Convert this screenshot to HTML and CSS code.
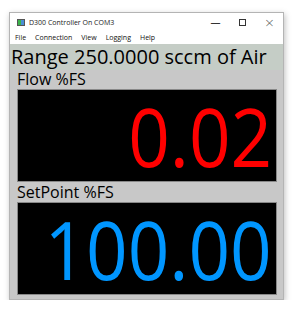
FILE: index.html
```html
<!DOCTYPE html>
<html lang="en">
<head>
    <meta charset="UTF-8">
    <title>D300 Controller On COM3</title>
    <link rel="stylesheet" href="styles.css">
</head>
<body>

    <div class="window">
        <div class="title-bar">
            <div class="app-icon"><span class="icon-green"></span><span class="icon-blue"></span></div>
            <span class="title">D300 Controller On COM3</span>
            <div class="controls">
                <span class="ctl">&#8212;</span>
                <span class="ctl"><span class="max-box"></span></span>
                <span class="ctl close">&#215;</span>
            </div>
        </div>
        <div class="menu-bar">
            <span>File</span>
            <span>Connection</span>
            <span>View</span>
            <span>Logging</span>
            <span>Help</span>
        </div>
        <div class="range">Range 250.0000 sccm of Air</div>
        <div class="content">
            <div class="label">Flow %FS</div>
            <div class="readout flow"><span class="value">0.02</span></div>
            <div class="label">SetPoint %FS</div>
            <div class="readout setpoint"><span class="value">100.00</span></div>
        </div>
    </div>

</body>
</html>
```

FILE: styles.css
```css
body {
    margin: 0;
    background-color: white;
    font-family: "Open Sans", Arial, sans-serif;
    overflow: hidden;
}
.window {
    margin: 12px 0 0 9px;
    width: 273px;
    height: 286px;
    border: 1px solid #b4b4b4;
    box-shadow: 1px 2px 6px rgba(0, 0, 0, 0.25);
    display: flex;
    flex-direction: column;
    background-color: #c8c8c8;
}
.title-bar {
    height: 18px;
    background-color: white;
    display: flex;
    align-items: center;
    font-size: 7px;
    color: #222;
}
.app-icon {
    width: 8px;
    height: 7px;
    margin: 0 4px 0 7px;
    display: flex;
    background-color: #555;
    padding: 1px;
    box-sizing: border-box;
}
.icon-green {
    width: 3px;
    background-color: #3cb44b;
}
.icon-blue {
    width: 3px;
    background-color: #4a8fd6;
}
.controls {
    margin-left: auto;
    display: flex;
}
.ctl {
    width: 27px;
    text-align: center;
    font-size: 10px;
    color: #333;
}
.max-box {
    display: inline-block;
    width: 7px;
    height: 7px;
    border: 1px solid #333;
    box-sizing: border-box;
}
.close {
    font-size: 13px;
    font-family: "DejaVu Sans", sans-serif;
    font-weight: 200;
    color: #555;
}
.menu-bar {
    height: 13px;
    background-color: white;
    display: flex;
    gap: 9px;
    padding-left: 5px;
    font-size: 7px;
    line-height: 13px;
    color: #111;
}
.range {
    height: 26px;
    background-color: #c5cdc6;
    font-size: 20px;
    line-height: 26px;
    padding-left: 1px;
    white-space: nowrap;
    color: black;
}
.content {
    padding: 0 6px 0 7px;
    display: flex;
    flex-direction: column;
}
.label {
    font-size: 16px;
    line-height: 19px;
    height: 19px;
    color: black;
}
.readout {
    height: 91px;
    background-color: black;
    border: 1px solid #888;
    text-align: right;
    padding-right: 4px;
    overflow: hidden;
    white-space: nowrap;
}
.value {
    display: inline-block;
    font-size: 80px;
    line-height: 91px;
    transform: scaleX(0.91);
    transform-origin: right center;
}
.flow {
    color: #ff0000;
    margin-bottom: 1px;
}
.setpoint {
    color: #0096ff;
}
```
